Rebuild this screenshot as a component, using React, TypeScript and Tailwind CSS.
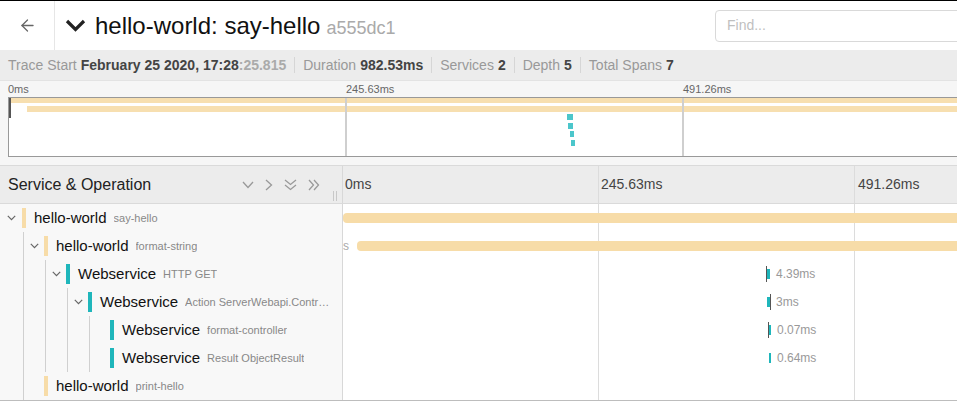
import { ArrowLeft } from "lucide-react";

type Span = {
  depth: number;
  service: string;
  op: string;
  color: "orange" | "teal";
  open: boolean;
  bar?: { left: number; width: number };
  marker?: number;
  label?: { left: number; text: string };
  before?: { right: number; text: string };
};

const spans: Span[] = [
  { depth: 0, service: "hello-world", op: "say-hello", color: "orange", open: true, bar: { left: 0, width: 1100 } },
  {
    depth: 1,
    service: "hello-world",
    op: "format-string",
    color: "orange",
    open: true,
    bar: { left: 14, width: 1100 },
    before: { right: 6, text: "972.4ms" },
  },
  {
    depth: 2,
    service: "Webservice",
    op: "HTTP GET",
    color: "teal",
    open: true,
    bar: { left: 424, width: 3 },
    marker: 423,
    label: { left: 433, text: "4.39ms" },
  },
  {
    depth: 3,
    service: "Webservice",
    op: "Action ServerWebapi.Controllers.FormatController.Get (ServerWebapi)",
    color: "teal",
    open: true,
    bar: { left: 424, width: 3 },
    marker: 427,
    label: { left: 433, text: "3ms" },
  },
  {
    depth: 4,
    service: "Webservice",
    op: "format-controller",
    color: "teal",
    open: false,
    bar: { left: 426, width: 2 },
    marker: 425,
    label: { left: 434, text: "0.07ms" },
  },
  {
    depth: 4,
    service: "Webservice",
    op: "Result ObjectResult",
    color: "teal",
    open: false,
    bar: { left: 426, width: 2 },
    label: { left: 434, text: "0.64ms" },
  },
  { depth: 1, service: "hello-world", op: "print-hello", color: "orange", open: false },
];

const Caret = () => (
  <svg width="9" height="6" viewBox="0 0 9 6" fill="none">
    <polyline points="0.8,0.8 4.5,4.6 8.2,0.8" stroke="#666" strokeWidth="1.2" />
  </svg>
);

const Ticks = () => (
  <>
    <div className="absolute top-0 bottom-0 left-[255px] w-px bg-[#dcdcdc]" />
    <div className="absolute top-0 bottom-0 left-[511px] w-px bg-[#dcdcdc]" />
  </>
);

function SpanRow({ s }: { s: Span }) {
  const cells = Array.from({ length: s.depth + 1 }, (_, k) => k);
  const barColor = s.color === "orange" ? "bg-[#f7dca8]" : "bg-[#1fb6bb]";
  return (
    <div className="flex h-[28px]">
      <div className="flex w-[343px] shrink-0 items-center overflow-hidden border-r border-[#d8d8d8] bg-[#f8f8f8] pr-2">
        {cells.map((k) => (
          <div
            key={k}
            className={
              k === 0
                ? "flex h-full w-[22px] shrink-0 items-center justify-center"
                : "ml-px flex h-full w-[21px] shrink-0 items-center justify-center border-l border-[#d0d0d0]"
            }
          >
            {k === s.depth && s.open && <Caret />}
          </div>
        ))}
        <div className={`h-5 w-1 shrink-0 ${barColor}`} />
        <span className="ml-2 shrink-0 text-[15px] text-[#111]">{s.service}</span>
        <span className="ml-[7px] min-w-0 truncate text-[11px] text-[#888]">{s.op}</span>
      </div>
      <div className="relative flex-1 overflow-hidden bg-white">
        <Ticks />
        {s.before && (
          <div
            className="absolute top-0 bottom-0 flex -translate-x-full items-center text-[12px] text-[#aaa]"
            style={{ left: s.before.right }}
          >
            {s.before.text}
          </div>
        )}
        {s.bar && (
          <div
            className={`absolute top-[9px] h-[10px] ${s.bar.width > 10 ? "rounded" : ""} ${barColor}`}
            style={{ left: s.bar.left, width: s.bar.width }}
          />
        )}
        {s.marker !== undefined && (
          <div className="absolute top-[6px] h-4 w-px bg-[#555]" style={{ left: s.marker }} />
        )}
        {s.label && (
          <div
            className="absolute top-0 bottom-0 flex items-center text-[12px] text-[#999]"
            style={{ left: s.label.left }}
          >
            {s.label.text}
          </div>
        )}
      </div>
    </div>
  );
}

function Summary() {
  const items: [string, React.ReactNode][] = [
    [
      "Trace Start",
      <>
        February 25 2020, 17:28<span className="text-[#aaa]">:25.815</span>
      </>,
    ],
    ["Duration", "982.53ms"],
    ["Services", "2"],
    ["Depth", "5"],
    ["Total Spans", "7"],
  ];
  return (
    <div className="flex h-[30px] items-center bg-[#ececec] px-2 text-[14px]">
      {items.map(([label, value], i) => (
        <div key={label} className="flex items-center">
          {i > 0 && <div className="mx-2 h-4 w-px bg-[#d6d6d6]" />}
          <span className="text-[#999]">{label}</span>
          <span className="ml-1 font-bold text-[#444]">{value}</span>
        </div>
      ))}
    </div>
  );
}

function Minimap() {
  const dots = [
    { left: 558, top: 16, w: 6 },
    { left: 559, top: 25, w: 5 },
    { left: 561, top: 33, w: 4 },
    { left: 562, top: 42, w: 4 },
  ];
  return (
    <div className="border-t border-[#e3e3e3] bg-[#f6f6f6] pb-2 pl-2">
      <div className="relative h-4 text-[11px] leading-4 text-[#666]">
        <span className="absolute left-0">0ms</span>
        <span className="absolute left-[338px]">245.63ms</span>
        <span className="absolute left-[675px]">491.26ms</span>
      </div>
      <div className="relative -mr-4 h-[60px] overflow-hidden border border-[#999] bg-white">
        <div className="absolute top-0 left-0 h-[5px] w-[1200px] bg-[#f7dfb0]" />
        <div className="absolute top-[8px] left-[18px] h-[6px] w-[1200px] bg-[#f7dfb0]" />
        {dots.map((d) => (
          <div
            key={d.top}
            className="absolute h-[6px] bg-[#4cc6cb]"
            style={{ left: d.left, top: d.top, width: d.w }}
          />
        ))}
        <div className="absolute top-0 bottom-0 left-[336px] w-[2px] bg-[#cfcfcf]" />
        <div className="absolute top-0 bottom-0 left-[673px] w-[2px] bg-[#cfcfcf]" />
        <div className="absolute top-0 left-0 h-5 w-[2px] bg-[#555]" />
      </div>
    </div>
  );
}

export default function App() {
  return (
    <div className="h-[416px] w-[957px] overflow-hidden border-t border-black bg-white font-['Liberation_Sans',Arial,sans-serif]">
      {/* title row */}
      <div className="flex h-[49px] items-center">
        <div className="flex h-full w-[55px] shrink-0 items-center justify-center border-r border-[#e6e6e6]">
          <ArrowLeft size={19} strokeWidth={1.6} className="text-[#666]" />
        </div>
        <svg width="21" height="14" viewBox="0 0 21 14" fill="none" className="ml-[10px] shrink-0">
          <polyline points="2,2 10.5,10.5 19,2" stroke="#222" strokeWidth="3.2" />
        </svg>
        <div className="ml-[9px] flex flex-1 items-baseline whitespace-nowrap">
          <span className="text-[24px] text-[#111]">hello-world: say-hello</span>
          <span className="ml-[6px] text-[18px] text-[#aaa]">a555dc1</span>
        </div>
        <div className="-mr-10 flex h-8 w-[282px] shrink-0 items-center rounded border border-[#d9d9d9] pl-[11px] text-[14px] text-[#bfbfbf]">
          Find...
        </div>
      </div>

      <Summary />
      <Minimap />

      {/* table */}
      <div className="border-b border-[#bdbdbd]">
        <div className="flex h-[39px] border-y border-[#dadada] bg-[#ececec]">
          <div className="flex w-[343px] shrink-0 items-center border-r border-[#d8d8d8] pl-2 pr-[5px]">
            <span className="flex-1 text-[16px] text-[#222]">Service &amp; Operation</span>
            <div className="flex items-center gap-[11px]">
              <svg width="12" height="8" viewBox="0 0 12 8" fill="none">
                <polyline points="1,1 6,6.5 11,1" stroke="#999" strokeWidth="1.3" />
              </svg>
              <svg width="8" height="12" viewBox="0 0 8 12" fill="none">
                <polyline points="1,1 6.5,6 1,11" stroke="#999" strokeWidth="1.3" />
              </svg>
              <svg width="13" height="12" viewBox="0 0 13 12" fill="none">
                <polyline points="1,1 6.5,5.5 12,1" stroke="#999" strokeWidth="1.3" />
                <polyline points="1,6 6.5,10.5 12,6" stroke="#999" strokeWidth="1.3" />
              </svg>
              <svg width="12" height="12" viewBox="0 0 12 12" fill="none">
                <polyline points="1,1 5.5,6 1,11" stroke="#999" strokeWidth="1.3" />
                <polyline points="6,1 10.5,6 6,11" stroke="#999" strokeWidth="1.3" />
              </svg>
            </div>
            <div className="ml-[13px] flex gap-[2px] self-end pb-[2px]">
              <div className="h-[10px] w-px bg-[#c8c8c8]" />
              <div className="h-[10px] w-px bg-[#c8c8c8]" />
            </div>
          </div>
          <div className="relative flex-1 overflow-hidden text-[14px] text-[#444]">
            <Ticks />
            <div className="absolute top-0 bottom-0 left-[2px] flex items-center">0ms</div>
            <div className="absolute top-0 bottom-0 left-[258px] flex items-center">245.63ms</div>
            <div className="absolute top-0 bottom-0 left-[515px] flex items-center">491.26ms</div>
          </div>
        </div>
        {spans.map((s, i) => (
          <SpanRow key={i} s={s} />
        ))}
      </div>
    </div>
  );
}
